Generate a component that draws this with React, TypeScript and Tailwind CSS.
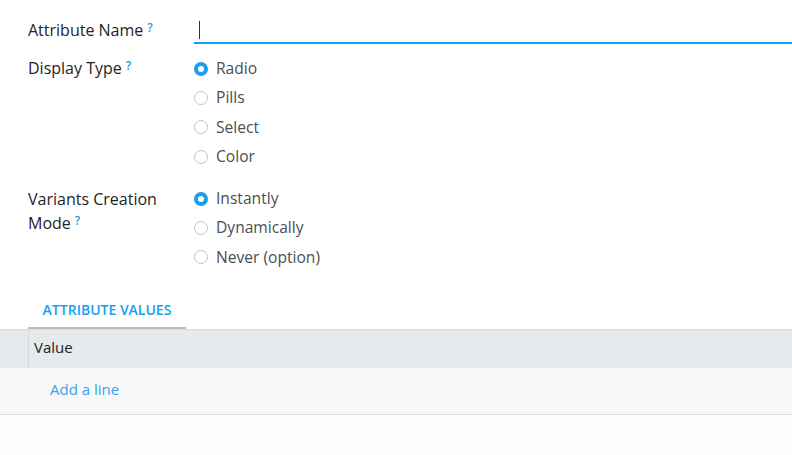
import React, { useState } from 'react';

const font = { fontFamily: '"Open Sans", "Noto Sans", sans-serif' };

const Help: React.FC = () => (
  <sup className="ml-[4px] text-[12px] font-semibold text-[#1a9fe8] relative -top-[4px]">?</sup>
);

const Radio: React.FC<{ label: string; checked: boolean; onClick: () => void }> = ({ label, checked, onClick }) => (
  <label onClick={onClick} className="flex items-center h-[29.3px] cursor-pointer">
    <span
      className={
        checked
          ? 'w-[14px] h-[14px] rounded-full border-[4px] border-[#1a9ff0] bg-white'
          : 'w-[14px] h-[14px] rounded-full border border-[#c4c4c4] bg-white'
      }
    />
    <span className="ml-[8px] text-[15.6px] text-[#4a4f55]">{label}</span>
  </label>
);

const App: React.FC = () => {
  const [display, setDisplay] = useState('Radio');
  const [mode, setMode] = useState('Instantly');

  return (
    <div className="w-[792px] h-[455px] bg-[#fcfcfc] overflow-hidden" style={font}>
      <div className="bg-white">
        {/* Form fields */}
        <div className="pl-[28px] pt-[18px]">
          <div className="flex">
            <div className="w-[166px] text-[16px] text-[#1f2326]">
              Attribute Name<Help />
            </div>
            <div className="flex-1 h-[26px] border-b-2 border-[#10a3f5] flex items-center">
              <span className="ml-[5px] w-[1px] h-[18px] bg-[#333]" />
            </div>
          </div>

          <div className="flex mt-[10px]">
            <div className="w-[166px] pt-[2px] text-[16px] text-[#1f2326]">
              Display Type<Help />
            </div>
            <div className="flex flex-col">
              {['Radio', 'Pills', 'Select', 'Color'].map(o => (
                <Radio key={o} label={o} checked={display === o} onClick={() => setDisplay(o)} />
              ))}
            </div>
          </div>

          <div className="flex mt-[13px]">
            <div className="w-[166px] pt-[3px] text-[16px] leading-[24px] text-[#1f2326]">
              Variants Creation
              <br />
              Mode<Help />
            </div>
            <div className="flex flex-col">
              {['Instantly', 'Dynamically', 'Never (option)'].map(o => (
                <Radio key={o} label={o} checked={mode === o} onClick={() => setMode(o)} />
              ))}
            </div>
          </div>
        </div>

        {/* Notebook tab */}
        <div className="pl-[28px] mt-[21px]">
          <div className="w-[158px] h-[36px] flex items-center justify-center pb-[2px] border-b-2 border-[#bdbdbd]">
            <span className="text-[14px] font-semibold text-[#14a0f2] uppercase">Attribute Values</span>
          </div>
        </div>
      </div>

      {/* Lines table */}
      <div className="border-t border-[#dcdcdc]">
        <div className="flex h-[38px] bg-[#e6eaed]">
          <div className="w-[29px] border-r border-[#d5d8dc]" />
          <div className="flex items-center pl-[5px] pb-[4px] text-[15px] text-[#1f2326]">Value</div>
        </div>
        <div className="h-[47px] bg-[#f8f8f8] border-b border-[#e0e0e0] flex items-center pl-[50px] pb-[3px]">
          <button className="text-[15px] text-[#3aa2eb]">Add a line</button>
        </div>
      </div>
    </div>
  );
};

export default App;
